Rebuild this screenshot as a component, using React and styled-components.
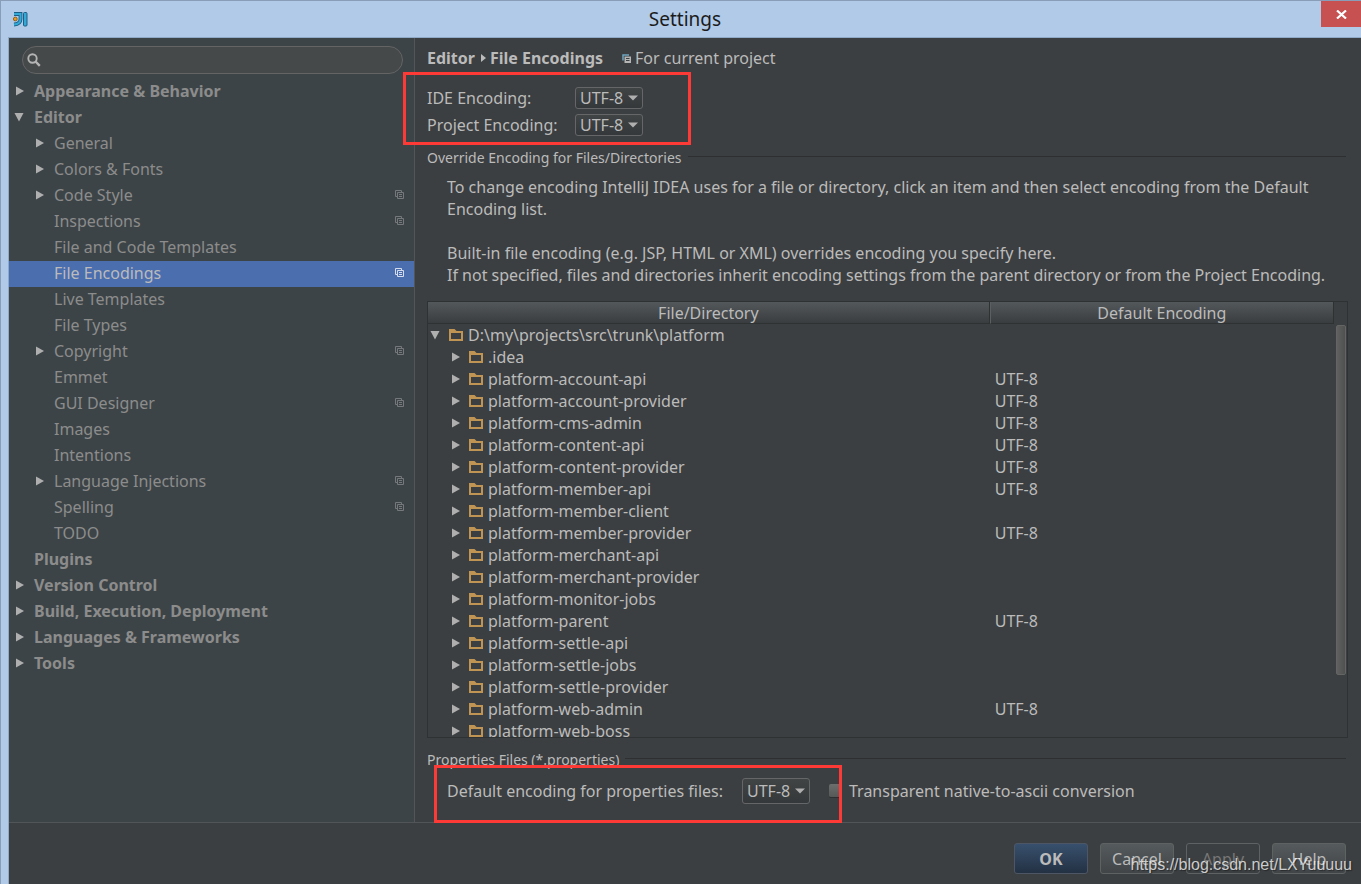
import React, { useState } from 'react';
import styled, { createGlobalStyle, css } from 'styled-components';

const GlobalStyle = createGlobalStyle`
  * {
    box-sizing: border-box;
  }
  body {
    margin: 0;
    background: #3c3f41;
    color: #bbbbbb;
    font-family: "Noto Sans", "Open Sans", sans-serif;
    font-size: 16px;
    line-height: 22px;
  }
  button, select, input {
    font: inherit;
    color: inherit;
    margin: 0;
  }
`;

const Window = styled.div`
  display: flex;
  flex-direction: column;
  height: 100vh;
  min-height: 600px;
  position: relative;
  overflow: hidden;
  background: #b0cae8;
  border-top: 1px solid #8a9db8;
  border-left: 1px solid #8a9db8;
`;

const TitleBar = styled.header`
  display: grid;
  grid-template-columns: 40px 1fr 40px;
  height: 36px;
  flex: none;
`;

const Logo = styled.svg`
  width: 15px;
  height: 15px;
  margin: 11px 0 0 12px;
`;

const Title = styled.h1`
  margin: 0;
  padding-left: 8px;
  font-size: 19px;
  font-weight: 400;
  line-height: 36px;
  text-align: center;
  color: #1b1b1b;
`;

const CloseButton = styled.button`
  display: flex;
  align-items: center;
  justify-content: center;
  height: 26px;
  padding: 0;
  border: 0;
  background: #c75050;
  color: #ffffff;
`;

const Body = styled.div`
  display: flex;
  flex-direction: column;
  flex: 1;
  min-height: 0;
  margin-left: 7px;
  border-top: 1px solid #8faac8;
  border-left: 1px solid #8faac8;
  background: #3c3f41;
`;

const Panes = styled.div`
  display: flex;
  flex: 1;
  min-height: 0;
`;

const Sidebar = styled.aside`
  flex: none;
  width: 406px;
  padding-top: 8px;
  background: #3d4447;
  border-right: 1px solid #515658;
`;

const SearchBox = styled.label`
  display: flex;
  align-items: center;
  height: 28px;
  margin: 0 11px 5px 13px;
  padding: 0 12px 0 4px;
  border: 1px solid #646464;
  border-radius: 14px;
  background: #45494a;

  input {
    flex: 1;
    min-width: 0;
    padding: 0 6px;
    border: 0;
    outline: 0;
    background: transparent;
  }
`;

const NavList = styled.ul`
  list-style: none;
  margin: 0;
  padding: 0;
`;

const NavLink = styled.a`
  display: flex;
  align-items: center;
  height: 26px;
  padding: 0 9px 2px ${({ $level }) => 5 + $level * 20}px;
  color: ${({ $active }) => ($active ? '#bbbbbb' : '#8c8c8c')};
  font-weight: ${({ $level }) => ($level ? 400 : 700)};
  text-decoration: none;
  white-space: nowrap;
  background: ${({ $active }) => ($active ? '#4b6eaf' : 'transparent')};
`;

const NavText = styled.span`
  flex: 1;
`;

const ArrowSlot = styled.span`
  display: flex;
  align-items: center;
  flex: none;
  width: 20px;
  color: #afafaf;
`;

const ScopeIcon = styled.svg`
  flex: none;
  width: 10px;
  height: 10px;
  color: ${({ $active }) => ($active ? '#d5dced' : '#75797b')};
`;

const Main = styled.main`
  display: flex;
  flex-direction: column;
  flex: 1;
  min-width: 0;
  padding: 9px 13px 0 12px;
`;

const Breadcrumb = styled.div`
  display: flex;
  align-items: center;
  margin-bottom: 18px;

  strong {
    font-weight: 700;
  }
  svg {
    margin: 0 4px 0 6px;
  }
`;

const Scope = styled.span`
  display: flex;
  align-items: center;
  margin-left: 13px;
`;

const EncodingForm = styled.div`
  display: grid;
  grid-template-columns: 148px auto;
  justify-content: start;
  align-items: center;
  row-gap: 5px;
  position: relative;
`;

/* red frame that calls attention to a group of fields */
const Highlight = styled.div`
  position: absolute;
  z-index: 2;
  border: 3px solid #fd3a36;
  pointer-events: none;
  ${({ $area }) => $area === 'encodings' ? css`
    top: -15px;
    left: -24px;
    width: 288px;
    height: 73px;
  ` : css`
    top: 15px;
    left: 7px;
    width: 408px;
    height: 58px;
  `}
`;

const SelectBox = styled.span`
  display: inline-grid;
  align-items: center;
  width: 68px;
  height: ${({ $tall }) => ($tall ? 26 : 22)}px;
  border: 1px solid #646667;
  border-radius: 3px;
  background: linear-gradient(#414445, #35383a);

  select {
    grid-area: 1 / 1;
    width: 100%;
    height: 100%;
    padding: 0 0 0 4px;
    border: 0;
    outline: 0;
    appearance: none;
    background: transparent;
    line-height: 20px;
  }
  option {
    background: #3c3f41;
  }
  svg {
    grid-area: 1 / 1;
    justify-self: end;
    margin-right: 4px;
    pointer-events: none;
  }
`;

const SectionTitle = styled.h2`
  display: flex;
  align-items: center;
  gap: 6px;
  margin: 0;
  font-size: 14px;
  font-weight: 400;
  line-height: 20px;

  &::after {
    content: '';
    flex: 1;
    height: 1px;
    margin: 0 2px 4px 0;
    background: #2d2f30;
  }
`;

const Override = styled.section`
  display: flex;
  flex-direction: column;
  flex: 1;
  min-height: 0;
  margin-top: 12px;
`;

const Help = styled.div`
  padding-left: 20px;
  margin: 8px 0 15px;

  p {
    margin: 0 0 22px;
  }
  p:last-child {
    margin: 0;
  }
`;

const TableFrame = styled.div`
  display: flex;
  flex: 1;
  min-height: 0;
  overflow: hidden;
  border: 1px solid #2f3233;
`;

const EncodingTable = styled.table`
  flex: 1;
  align-self: flex-start;
  table-layout: fixed;
  border-collapse: separate;
  border-spacing: 0;

  th {
    height: 22px;
    padding: 1px 0 0;
    font-weight: 400;
    line-height: 20px;
    border-right: 1px solid #2f3233;
    border-bottom: 1px solid #2f3233;
    background: linear-gradient(#53585b, #3a3d3f);
  }
  th:first-child {
    width: 62%;
  }
  th + th {
    border-left: 1px solid #5b5f61;
  }
  td {
    height: 22px;
    padding: 0 5px;
    white-space: nowrap;
  }
  td:first-child {
    padding-left: 2px;
  }
`;

const TreeCell = styled.div`
  display: flex;
  align-items: center;
  padding-left: ${({ $level }) => $level * 20}px;

  svg {
    flex: none;
  }
`;

const TreeArrow = styled.span`
  display: flex;
  flex: none;
  width: 19px;
  color: #afafaf;
`;

const TreeName = styled.span`
  margin-left: 5px;
`;

const ScrollTrack = styled.div`
  flex: none;
  width: 13px;
  padding: 23px 1px 0 2px;
`;

const ScrollThumb = styled.div`
  height: 85%;
  border: 1px solid #646464;
  border-radius: 2px;
  background: linear-gradient(to right, #606060, #4f5050);
`;

const Properties = styled.section`
  position: relative;
  flex: none;
  margin-top: 12px;
`;

const PropertiesRow = styled.div`
  display: flex;
  align-items: center;
  height: 26px;
  margin: 8px 0 18px;
  padding-left: 20px;
`;

const FieldLabel = styled.label`
  white-space: nowrap;
  margin-right: ${({ $gap }) => $gap || 0}px;
`;

const CheckLabel = styled.label`
  display: flex;
  align-items: center;
  gap: 8px;
  margin-left: 19px;

  input {
    width: 12px;
    height: 14px;
    appearance: none;
    border-bottom: 1px solid #2c2e2f;
    border-radius: 2px;
    background: linear-gradient(#6c6d6d, #565858);
  }
  input:checked {
    background: #4b6eaf;
  }
`;

const Footer = styled.footer`
  display: flex;
  justify-content: flex-end;
  gap: 12px;
  flex: none;
  padding: 20px 15px 10px;
  border-top: 1px solid #515558;
`;

const Button = styled.button`
  width: 74px;
  height: 31px;
  padding: 0;
  border: 1px solid #5e6263;
  border-radius: 3px;
  background: linear-gradient(#555a5c, #414547);

  ${({ $primary }) => $primary && css`
    font-weight: 700;
    border-color: #4c5664;
    background: linear-gradient(#38506d, #233143);
  `}
  &:disabled {
    color: #777777;
    background: transparent;
  }
`;

const Watermark = styled.div`
  position: absolute;
  right: 9px;
  bottom: 8px;
  font-family: "Liberation Sans", Arial, sans-serif;
  line-height: 22px;
  color: rgba(255, 255, 255, 0.75);
  text-shadow: 1px 1px 1px rgba(0, 0, 0, 0.4);
  pointer-events: none;
`;

const navItems = [
  { name: 'Appearance & Behavior', level: 0, arrow: 'right' },
  { name: 'Editor', level: 0, arrow: 'down' },
  { name: 'General', level: 1, arrow: 'right' },
  { name: 'Colors & Fonts', level: 1, arrow: 'right' },
  { name: 'Code Style', level: 1, arrow: 'right', scoped: true },
  { name: 'Inspections', level: 1, scoped: true },
  { name: 'File and Code Templates', level: 1 },
  { name: 'File Encodings', level: 1, scoped: true },
  { name: 'Live Templates', level: 1 },
  { name: 'File Types', level: 1 },
  { name: 'Copyright', level: 1, arrow: 'right', scoped: true },
  { name: 'Emmet', level: 1 },
  { name: 'GUI Designer', level: 1, scoped: true },
  { name: 'Images', level: 1 },
  { name: 'Intentions', level: 1 },
  { name: 'Language Injections', level: 1, arrow: 'right', scoped: true },
  { name: 'Spelling', level: 1, scoped: true },
  { name: 'TODO', level: 1 },
  { name: 'Plugins', level: 0 },
  { name: 'Version Control', level: 0, arrow: 'right' },
  { name: 'Build, Execution, Deployment', level: 0, arrow: 'right' },
  { name: 'Languages & Frameworks', level: 0, arrow: 'right' },
  { name: 'Tools', level: 0, arrow: 'right' },
];

const files = [
  { name: '.idea' },
  { name: 'platform-account-api', encoding: 'UTF-8' },
  { name: 'platform-account-provider', encoding: 'UTF-8' },
  { name: 'platform-cms-admin', encoding: 'UTF-8' },
  { name: 'platform-content-api', encoding: 'UTF-8' },
  { name: 'platform-content-provider', encoding: 'UTF-8' },
  { name: 'platform-member-api', encoding: 'UTF-8' },
  { name: 'platform-member-client' },
  { name: 'platform-member-provider', encoding: 'UTF-8' },
  { name: 'platform-merchant-api' },
  { name: 'platform-merchant-provider' },
  { name: 'platform-monitor-jobs' },
  { name: 'platform-parent', encoding: 'UTF-8' },
  { name: 'platform-settle-api' },
  { name: 'platform-settle-jobs' },
  { name: 'platform-settle-provider' },
  { name: 'platform-web-admin', encoding: 'UTF-8' },
  { name: 'platform-web-boss' },
];

const Arrow = ({ direction }) => (
  direction === 'down' ? (
    <svg width="10" height="10" viewBox="0 0 10 10"><path d="M0.500 1h9L5 9.500z" fill="currentColor" /></svg>
  ) : (
    <svg width="10" height="10" viewBox="0 0 10 10"><path d="M2 0.500v9L10 5z" fill="currentColor" /></svg>
  )
);

const FolderIcon = () => (
  <svg width="14" height="12" viewBox="0 0 14 12">
    <path fill="#c09553" fillRule="evenodd" d="M0 0h5.500l2 2H14v10H0zM2 4v6h10V4z" />
  </svg>
);

const Scoped = ({ active }) => (
  <ScopeIcon viewBox="0 0 10 10" $active={active}>
    <path d="M2 6.500H.5v-6h6V2" fill="none" stroke="currentColor" />
    <path d="M2.500 2.500h6v6h-6zM4 4.500h3M4 6.500h3" fill="none" stroke="currentColor" />
  </ScopeIcon>
);

const EncodingSelect = ({ id, tall }) => {
  const [value, setValue] = useState('UTF-8');

  return (
    <SelectBox $tall={tall}>
      <select id={id} value={value} onChange={(e) => setValue(e.target.value)}>
        <option>UTF-8</option>
        <option>GBK</option>
        <option>ISO-8859-1</option>
      </select>
      <svg width="10" height="6" viewBox="0 0 10 6"><path d="M0 0.500h10L5 5.500z" fill="#afafaf" /></svg>
    </SelectBox>
  );
};

const SettingsNav = () => {
  const [current, setCurrent] = useState('File Encodings');

  return (
    <nav>
      <NavList>
        {navItems.map(({ name, level, arrow, scoped }) => (
          <li key={name}>
            <NavLink href="#" $level={level} $active={name === current} onClick={() => setCurrent(name)}>
              <ArrowSlot>{arrow && <Arrow direction={arrow} />}</ArrowSlot>
              <NavText>{name}</NavText>
              {scoped && <Scoped active={name === current} />}
            </NavLink>
          </li>
        ))}
      </NavList>
    </nav>
  );
};

const App = () => (
  <>
    <GlobalStyle />
    <Window>
      <TitleBar>
        <Logo viewBox="0 0 15 15">
          <path d="M1 2h6.500v5q0 5-6.500 5.500" fill="none" stroke="#1c5f86" strokeWidth="3.800" />
          <path d="M1 2h6.500v5q0 5-6.500 5.500" fill="none" stroke="#35a9d6" strokeWidth="2" />
          <rect x="10.500" y="0.500" width="3.500" height="13.500" rx="1" fill="#35a9d6" stroke="#1c5f86" />
          <circle cx="2.300" cy="7" r="1.900" fill="#f09a1a" stroke="#7a5313" strokeWidth="0.800" />
        </Logo>
        <Title>Settings</Title>
        <CloseButton aria-label="Close">
          <svg width="11" height="9" viewBox="0 0 11 9">
            <path d="M1 0.500l9 8M10 0.500l-9 8" stroke="currentColor" strokeWidth="2.200" />
          </svg>
        </CloseButton>
      </TitleBar>
      <Body>
        <Panes>
          <Sidebar>
            <SearchBox>
              <svg width="14" height="14" viewBox="0 0 14 14">
                <circle cx="5.500" cy="5.500" r="4.200" fill="none" stroke="#b4b4b4" strokeWidth="1.900" />
                <path d="M8.500 8.500l4.300 4.300" stroke="#b4b4b4" strokeWidth="2.400" />
              </svg>
              <input type="text" aria-label="Search settings" />
            </SearchBox>
            <SettingsNav />
          </Sidebar>
          <Main>
            <Breadcrumb>
              <strong>Editor</strong>
              <svg width="5" height="8" viewBox="0 0 5 8"><path d="M0 0v8l5-4z" fill="#bbbbbb" /></svg>
              <strong>File Encodings</strong>
              <Scope>
                <svg width="9" height="9" viewBox="0 0 9 9">
                  <path d="M1 6.500V1h6" fill="none" stroke="#6fa5c0" strokeWidth="1.500" />
                  <path d="M2.500 2.500H9V9H2.500z" fill="#b5b5b5" />
                  <path d="M4 4.500h3.500M4 6.500h3.500" stroke="#3c3f41" />
                </svg>
                For current project
              </Scope>
            </Breadcrumb>
            <EncodingForm>
              <FieldLabel htmlFor="ide-encoding">IDE Encoding:</FieldLabel>
              <EncodingSelect id="ide-encoding" />
              <FieldLabel htmlFor="project-encoding">Project Encoding:</FieldLabel>
              <EncodingSelect id="project-encoding" />
              <Highlight $area="encodings" />
            </EncodingForm>
            <Override>
              <SectionTitle>Override Encoding for Files/Directories</SectionTitle>
              <Help>
                <p>
                  To change encoding IntelliJ IDEA uses for a file or directory, click an item and then
                  select encoding from the Default Encoding list.
                </p>
                <p>
                  Built-in file encoding (e.g. JSP, HTML or XML) overrides encoding you specify here.
                  <br />
                  If not specified, files and directories inherit encoding settings from the parent
                  directory or from the Project Encoding.
                </p>
              </Help>
              <TableFrame>
                <EncodingTable>
                  <thead>
                    <tr>
                      <th>File/Directory</th>
                      <th>Default Encoding</th>
                    </tr>
                  </thead>
                  <tbody>
                    <tr>
                      <td>
                        <TreeCell $level={0}>
                          <TreeArrow><Arrow direction="down" /></TreeArrow>
                          <FolderIcon />
                          <TreeName>D:\my\projects\src\trunk\platform</TreeName>
                        </TreeCell>
                      </td>
                      <td />
                    </tr>
                    {files.map(({ name, encoding }) => (
                      <tr key={name}>
                        <td>
                          <TreeCell $level={1}>
                            <TreeArrow><Arrow direction="right" /></TreeArrow>
                            <FolderIcon />
                            <TreeName>{name}</TreeName>
                          </TreeCell>
                        </td>
                        <td>{encoding}</td>
                      </tr>
                    ))}
                  </tbody>
                </EncodingTable>
                <ScrollTrack>
                  <ScrollThumb />
                </ScrollTrack>
              </TableFrame>
            </Override>
            <Properties>
              <SectionTitle>Properties Files (*.properties)</SectionTitle>
              <PropertiesRow>
                <FieldLabel htmlFor="properties-encoding" $gap={19}>
                  Default encoding for properties files:
                </FieldLabel>
                <EncodingSelect id="properties-encoding" tall />
                <CheckLabel>
                  <input type="checkbox" />
                  Transparent native-to-ascii conversion
                </CheckLabel>
              </PropertiesRow>
              <Highlight $area="properties" />
            </Properties>
          </Main>
        </Panes>
        <Footer>
          <Button $primary>OK</Button>
          <Button>Cancel</Button>
          <Button disabled>Apply</Button>
          <Button>Help</Button>
        </Footer>
      </Body>
      <Watermark>https://blog.csdn.net/LXYuuuuu</Watermark>
    </Window>
  </>
);

export default App;
